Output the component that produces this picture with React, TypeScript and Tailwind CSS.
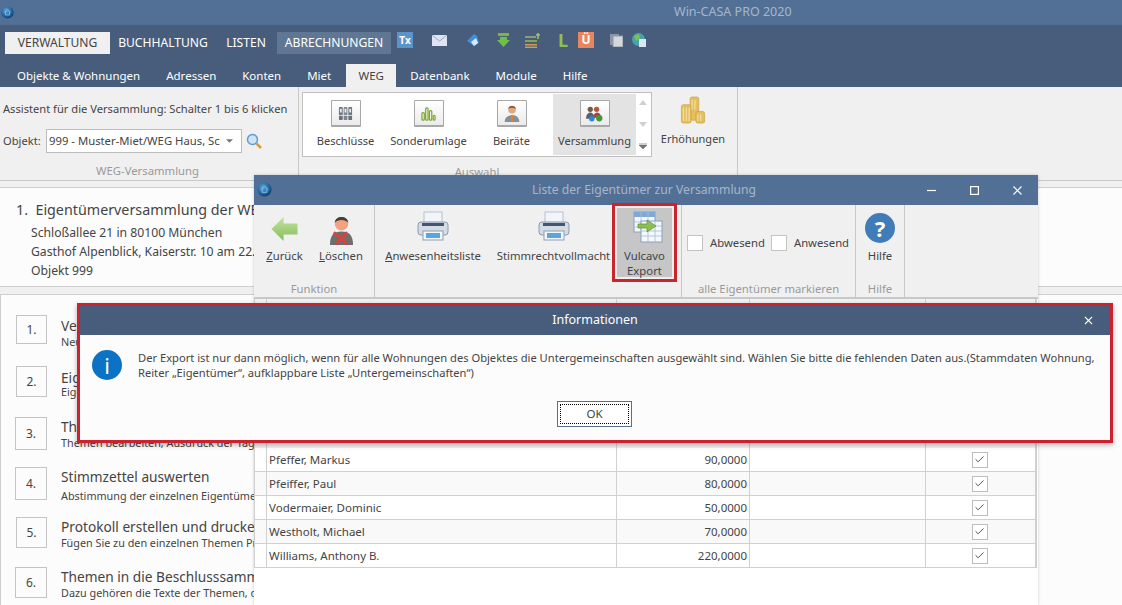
import React from 'react';
import { Check, X } from 'lucide-react';

const FONT = "font-['Noto_Sans','Open_Sans',sans-serif]";

const Globe = ({ className = '', id }: { className?: string; id: string }) => (
  <svg viewBox="0 0 16 16" className={className}>
    <defs>
      <radialGradient id={id} cx="40%" cy="35%" r="70%">
        <stop offset="0%" stopColor="#5aa6dc" />
        <stop offset="70%" stopColor="#1a5d9c" />
        <stop offset="100%" stopColor="#0c3560" />
      </radialGradient>
    </defs>
    <circle cx="8" cy="8" r="7.5" fill={`url(#${id})`} />
    <path d="M4 8l4-3.5L12 8M5.5 7.5V11h5V7.5" fill="none" stroke="#8fbfe3" strokeWidth="1" />
  </svg>
);

const Printer = () => (
  <svg viewBox="0 0 32 30" className="h-[30px] w-[32px]">
    <rect x="7" y="1" width="18" height="13" fill="#f1f4f8" stroke="#b8c2ce" />
    <rect x="1" y="11" width="30" height="13" rx="3" fill="#d3dbe5" stroke="#8c9cb1" />
    <rect x="5" y="12" width="22" height="3" fill="#44556e" />
    <rect x="6" y="20" width="20" height="9" fill="#f4f6f9" stroke="#8ea0b7" />
    <rect x="9" y="22" width="14" height="5" fill="#5ba4dc" />
  </svg>
);

const ExportIcon = () => (
  <svg viewBox="0 0 30 32" className="h-[32px] w-[30px]">
    <rect x="1" y="1" width="21" height="20" fill="#f4f7fb" stroke="#8aa0bb" />
    <rect x="1" y="1" width="21" height="5" fill="#7fa8d8" />
    <path d="M1 11h21M1 16h21M8 1v20M15 1v20" stroke="#a9bbd1" strokeWidth="0.8" />
    <rect x="8" y="10" width="21" height="21" fill="#f4f7fb" stroke="#8aa0bb" />
    <path d="M8 15h21M8 20h21M8 25h21M15 10v21M22 10v21" stroke="#a9bbd1" strokeWidth="0.8" />
    <path d="M5 13h9V9l9 6-9 6v-4H5z" fill="#8cc152" stroke="#5d9130" strokeWidth="0.7" />
  </svg>
);

const ToolbarButton = ({ label, children, width }: { label: React.ReactNode; children: React.ReactNode; width: string }) => (
  <div className={`flex flex-col items-center ${width}`}>
    <div className="flex h-[36px] items-center">{children}</div>
    <div className="mt-[4px] whitespace-nowrap text-center text-[11.3px] leading-[15px] text-[#444]">{label}</div>
  </div>
);

const galleryIcons: Record<string, React.ReactNode> = {
  books: (
    <svg viewBox="0 0 16 16" className="h-[15px] w-[15px]">
      <rect x="1" y="1" width="4" height="14" rx="1" fill="#68707c" />
      <rect x="6" y="1" width="4" height="14" rx="1" fill="#7c8490" />
      <rect x="11" y="1" width="4" height="14" rx="1" fill="#68707c" />
      <path d="M2 3h2v4H2zM7 3h2v4H7zM12 3h2v4h-2z" fill="#e8e8e8" />
      <path d="M1 10h14" stroke="#e8e8e8" />
    </svg>
  ),
  bars: (
    <svg viewBox="0 0 16 16" className="h-[15px] w-[15px]">
      <g fill="none" stroke="#7fa62c" strokeWidth="1.3">
        <rect x="1" y="7" width="2.5" height="8" rx="1" />
        <rect x="5" y="2" width="2.5" height="13" rx="1" />
        <rect x="9" y="5" width="2.5" height="10" rx="1" />
        <rect x="13" y="10" width="2" height="5" rx="1" />
      </g>
    </svg>
  ),
  person: (
    <svg viewBox="0 0 16 16" className="h-[18px] w-[18px]">
      <circle cx="8" cy="5" r="3.4" fill="#e3a878" />
      <path d="M4.6 4.4C5 1 11 1 11.4 4.4 9.5 3 6.5 3 4.6 4.4z" fill="#6f5a44" />
      <path d="M1.5 16c0-4.5 3-6 6.5-6s6.5 1.500 6.500 6z" fill="#8a8f96" />
      <path d="M7 10h2l-.3 5h-1.400z" fill="#e8812f" />
    </svg>
  ),
  group: (
    <svg viewBox="0 0 18 16" className="h-[17px] w-[19px]">
      <circle cx="5" cy="4" r="2.500" fill="#6d5a4b" />
      <circle cx="11" cy="4" r="2.500" fill="#b2573e" />
      <path d="M1 13c0-4 2-6 4-6s4 2 4 6z" fill="#59616b" />
      <path d="M8 12c0-3 1-5 3.500-5S15 9 15 12z" fill="#a9453a" />
      <circle cx="6.500" cy="13" r="2.600" fill="#2f86d6" />
      <circle cx="13.500" cy="12.500" r="3" fill="#3d9a3a" />
    </svg>
  ),
};

const GalleryItem = ({ label, icon, active }: { label: string; icon: string; active?: boolean }) => (
  <div className={`flex w-[83px] flex-col items-center pt-[6px] ${active ? 'bg-[#e3e3e3]' : ''}`}>
    <div className="flex h-[27px] w-[30px] items-center justify-center rounded-[1px] border border-[#a8a8a8] border-b-2 bg-gradient-to-b from-white to-[#ebebeb]">
      {galleryIcons[icon]}
    </div>
    <div className="mt-[6px] whitespace-nowrap text-[11.1px] leading-[16px] text-[#444]">{label}</div>
  </div>
);

const steps = [
  { n: '1.', t: 'Versammlung anlegen', s: 'Neue Versammlung anlegen', box: 'ml-px h-[29px] w-[31px]', cls: 'h-[51px]', top: 'mt-[1px]', sub: 'mt-0' },
  { n: '2.', t: 'Eigentümer zuordnen', s: 'Eigentümer der Versammlung', box: 'ml-px h-[31px] w-[31px]', cls: 'h-[51px]', top: 'mt-[2px]', sub: 'mt-[-2px]' },
  { n: '3.', t: 'Themen festlegen', s: 'Themen bearbeiten, Ausdruck der Tagesordnung', box: 'h-[33px] w-[32px]', cls: 'h-[50px]', top: 'mt-0', sub: 'mt-0' },
  { n: '4.', t: 'Stimmzettel auswerten', s: 'Abstimmung der einzelnen Eigentümer erfassen', box: 'h-[33px] w-[32px]', cls: 'h-[50px]', top: 'mt-0', sub: 'mt-[3px]' },
  { n: '5.', t: 'Protokoll erstellen und drucken', s: 'Fügen Sie zu den einzelnen Themen Protokolltexte hinzu', box: 'ml-px h-[31px] w-[31px]', cls: 'h-[50px]', top: 'mt-0', sub: 'mt-0' },
  { n: '6.', t: 'Themen in die Beschlusssammlung', s: 'Dazu gehören die Texte der Themen, die Beschlüsse', box: 'h-[31px] w-[32px]', cls: 'h-[38px]', top: 'mt-0', sub: 'mt-0' },
];

const owners = [
  ['Pfeffer, Markus', '90,0000'],
  ['Pfeiffer, Paul', '80,0000'],
  ['Vodermaier, Dominic', '50,0000'],
  ['Westholt, Michael', '70,0000'],
  ['Williams, Anthony B.', '220,0000'],
];

const TopIcons = () => (
  <div className="ml-[6px] flex items-center">
    <div className="flex h-[16px] w-[16px] items-center justify-center bg-[#5b94c9] text-[10px] font-bold leading-none text-white">Tx</div>
    <svg viewBox="0 0 15 11" className="ml-[19px] h-[11px] w-[15px]"><rect width="15" height="11" fill="#dfe4f2" /><path d="M0 0l7.500 6L15 0" fill="none" stroke="#9aa6c4" /></svg>
    <svg viewBox="0 0 14 14" className="ml-[19px] h-[14px] w-[14px]"><path d="M1 8l7-7 3 2 2 7-5 3z" fill="#3f8fdc" /><path d="M5 9l5-4 2 5-4 3z" fill="#dfe9f5" /></svg>
    <svg viewBox="0 0 13 14" className="ml-[17px] h-[14px] w-[13px]"><rect x="1" y="0" width="11" height="3" fill="#7cb342" /><path d="M3 4h7v3h3l-6.500 7L0 7h3z" fill="#6cc04a" /></svg>
    <svg viewBox="0 0 16 15" className="ml-[15px] h-[15px] w-[16px]"><path d="M0 3h11v2H0z" fill="#8f9a76" /><path d="M0 7h12v2H0z" fill="#7fa64b" /><path d="M0 11h12v1.500H0z" fill="#d09a55" /><path d="M0 13.500h12V15H0z" fill="#d09a55" /><path d="M13 0v6M11 2h4" stroke="#9cc46b" strokeWidth="1.500" /></svg>
    <span className="ml-[17px] w-[9px] text-[18px] font-bold leading-none text-[#8bc34a]">L</span>
    <div className="ml-[11px] flex h-[16px] w-[16px] items-center justify-center bg-[#e8855c] text-[12px] font-bold leading-none text-white">Ü</div>
    <svg viewBox="0 0 13 13" className="ml-[16px] h-[13px] w-[13px]"><rect x="0" y="0" width="9" height="11" fill="#8d97a3" /><rect x="3" y="2" width="10" height="11" fill="#d3d8de" stroke="#8d97a3" /></svg>
    <svg viewBox="0 0 14 14" className="ml-[9px] h-[14px] w-[14px]"><circle cx="6.500" cy="6.500" r="6.500" fill="#4aa3a8" /><path d="M2 3l5-2 1 4-4 3z" fill="#79c257" /><rect x="7" y="6" width="7" height="8" fill="#dbe6f4" /></svg>
  </div>
);

export default function App() {
  return (
    <div className={`relative flex h-[605px] w-[1122px] flex-col overflow-hidden bg-[#f0f0f0] ${FONT} text-[#444]`}>
      {/* title bar */}
      <div className="flex h-[25px] items-center bg-[#527096] pl-[1px]">
        <Globe id="g1" className="h-[13px] w-[13px]" />
        <div className="ml-[660px] text-[12.5px] text-[#a6b6ca]">Win-CASA PRO 2020</div>
      </div>

      {/* menu */}
      <div className="flex h-[35px] items-start bg-[#485d7c] pl-[5px] pt-[7px] text-[12.1px] text-white">
        <div className="flex h-[22px] w-[105px] items-center justify-center bg-[#f0f0f0] text-[#444]">VERWALTUNG</div>
        <div className="ml-[8px] flex h-[22px] w-[90px] items-center justify-center">BUCHHALTUNG</div>
        <div className="ml-[18px] flex h-[22px] w-[40px] items-center justify-center">LISTEN</div>
        <div className="ml-[11px] flex h-[22px] w-[114px] items-center justify-center bg-[#5f7793]">ABRECHNUNGEN</div>
        <div className="flex h-[17px] items-center"><TopIcons /></div>
      </div>

      {/* tabs */}
      <div className="flex h-[28px] items-end bg-[#485d7c] pl-[17px] text-[11.5px] text-white">
        <div className="flex h-[23px] items-center gap-[26px]">
          <span>Objekte &amp; Wohnungen</span>
          <span>Adressen</span>
          <span>Konten</span>
          <span>Miet</span>
        </div>
        <div className="ml-[15px] flex h-[23px] w-[50px] items-center justify-center bg-[#f0f0f0] text-[#444]">WEG</div>
        <div className="ml-[14px] flex h-[23px] items-center gap-[26px]">
          <span>Datenbank</span>
          <span>Module</span>
          <span>Hilfe</span>
        </div>
      </div>

      {/* ribbon */}
      <div className="flex h-[94px] border-b border-[#c8c8c8] bg-[#f0f0f0]">
        <div className="flex w-[299px] flex-col border-r border-[#c8c8c8] pl-[3px] text-[11.15px]">
          <div className="mt-[13px] whitespace-nowrap leading-[18px]">Assistent für die Versammlung: Schalter 1 bis 6 klicken</div>
          <div className="mt-[11px] flex items-center">
            <span className="w-[43px]">Objekt:</span>
            <div className="flex h-[24px] w-[196px] items-center justify-between border border-[#bdbdbd] bg-white pl-[2px] pr-[8px]">
              <span className="whitespace-nowrap text-[11.3px]">999 - Muster-Miet/WEG Haus, Sc</span>
              <svg viewBox="0 0 8 4" className="h-[4px] w-[7px]"><path d="M0 0h8L4 4z" fill="#777" /></svg>
            </div>
            <svg viewBox="0 0 16 16" className="ml-[4px] h-[16px] w-[16px]">
              <circle cx="6.500" cy="6.500" r="5" fill="#cfe5f7" stroke="#5f9bd1" strokeWidth="1.500" />
              <path d="M10.500 10.500l4.500 4.500" stroke="#d99a3d" strokeWidth="2.500" />
            </svg>
          </div>
          <div className="mt-[10px] pr-[6px] text-center text-[11.3px] leading-[16px] text-[#9a9a9a]">WEG-Versammlung</div>
        </div>
        <div className="flex w-[439px] border-r border-[#c8c8c8] pl-[3px] pt-[5px]">
          <div className="flex flex-col items-center">
            <div className="flex h-[65px] w-[350px] border border-[#c0c0c0] bg-white p-px">
              <GalleryItem label="Beschlüsse" icon="books" />
              <GalleryItem label="Sonderumlage" icon="bars" />
              <GalleryItem label="Beiräte" icon="person" />
              <GalleryItem label="Versammlung" icon="group" active />
              <div className="flex flex-1 flex-col items-center justify-between py-[6px]">
                <svg viewBox="0 0 8 5" className="h-[5px] w-[8px]"><path d="M0 5h8L4 0z" fill="#d0d0d0" /></svg>
                <svg viewBox="0 0 8 5" className="h-[5px] w-[8px]"><path d="M0 0h8L4 5z" fill="#d0d0d0" /></svg>
                <svg viewBox="0 0 8 6" className="h-[6px] w-[8px]"><path d="M0 0h8M0 2h8L4 6 0 2" fill="#777" stroke="#777" strokeWidth="0.7" /></svg>
              </div>
            </div>
            <div className="mt-[7px] text-[11.3px] leading-[16px] text-[#9a9a9a]">Auswahl</div>
          </div>
          <div className="flex w-[82px] flex-col items-center pt-[4px]">
            <svg viewBox="0 0 26 30" className="h-[29px] w-[26px]">
              <g fill="#e3bf60" stroke="#c59a35" strokeWidth="0.6">
                <rect x="10" y="1" width="9" height="24" rx="2" />
                <rect x="1" y="9" width="10" height="19" rx="2" />
                <rect x="16" y="16" width="9" height="12" rx="2" />
              </g>
              <path d="M3 12v14M6 12v14M9 12v14M12 4v10M15 4v10M18 19v7M21 19v7" stroke="#f6e6ae" />
            </svg>
            <div className="mt-[6px] text-[11px] leading-[16px] text-[#444]">Erhöhungen</div>
          </div>
        </div>
      </div>

      {/* Versammlung header */}
      <div className="mt-[6px] h-[101px] border-y border-[#cfcfcf] bg-[#fcfcfc] pl-[16px] pt-[11px]">
        <div className="whitespace-nowrap text-[14.3px] leading-[22px] text-[#444]">1.&nbsp; Eigentümerversammlung der WEG</div>
        <div className="ml-[15px] mt-[2px] text-[12.2px] leading-[19px] text-[#444]">
          <div>Schloßallee 21 in 80100 München</div>
          <div>Gasthof Alpenblick, Kaiserstr. 10 am 22.03.2020</div>
          <div>Objekt 999</div>
        </div>
      </div>

      {/* steps */}
      <div className="mt-[7px] flex-1 border-l border-t border-[#cfcfcf] bg-[#fcfcfc] pl-[14px] pt-[20px]">
        {steps.map((step) => (
          <div key={step.n} className={`flex items-start ${step.cls}`}>
            <div className={`flex shrink-0 items-center justify-center border border-[#c4c4c4] text-[12px] ${step.box}`}>{step.n}</div>
            <div className={`ml-[14px] whitespace-nowrap ${step.top}`}>
              <div className="text-[13.7px] leading-[19px]">{step.t}</div>
              <div className={`text-[10.8px] leading-[14px] ${step.sub}`}>{step.s}</div>
            </div>
          </div>
        ))}
      </div>

      {/* Liste der Eigentümer window */}
      <div className="absolute left-[254px] top-[175px] flex h-[430px] w-[784px] flex-col bg-white shadow-[0_0_3px_rgba(0,0,0,0.2)]">
        <div className="relative flex h-[30px] shrink-0 items-center justify-center bg-[#527096] pr-[4px] text-[12.2px] text-[#a6b6ca]">
          <Globe id="g2" className="absolute left-[3px] top-[7px] h-[15px] w-[15px]" />
          Liste der Eigentümer zur Versammlung
          <div className="absolute right-[16px] top-0 flex h-full items-center gap-[34px]">
            <svg viewBox="0 0 9 9" className="h-[9px] w-[9px]"><path d="M0 4.500h9" stroke="#fff" strokeWidth="1.200" /></svg>
            <svg viewBox="0 0 9 9" className="h-[9px] w-[9px]"><rect x="0.600" y="0.600" width="7.800" height="7.800" fill="none" stroke="#fff" strokeWidth="1.200" /></svg>
            <svg viewBox="0 0 9 9" className="h-[9px] w-[9px]"><path d="M0.500 0.500l8 8M8.500 0.500l-8 8" stroke="#fff" strokeWidth="1.200" /></svg>
          </div>
        </div>

        <div className="flex h-[94px] shrink-0 border-b-2 border-[#c8c8c8] bg-[#f0f0f0] text-[11.3px]">
          <div className="flex w-[121px] flex-col border-r border-[#c8c8c8]">
            <div className="flex pl-[12px] pt-[3px]">
              <ToolbarButton label={<><u>Z</u>urück</>} width="w-[37px]">
                <svg viewBox="0 0 30 28" className="mt-[6px] h-[26px] w-[29px]">
                  <defs>
                    <linearGradient id="arrow" x1="0" y1="0" x2="0" y2="1">
                      <stop offset="0%" stopColor="#c3e3a2" />
                      <stop offset="100%" stopColor="#86bc58" />
                    </linearGradient>
                  </defs>
                  <path d="M14 1v7h15v12H14v7L1 14z" fill="url(#arrow)" />
                </svg>
              </ToolbarButton>
              <ToolbarButton label={<><u>L</u>öschen</>} width="w-[44px] ml-[16px]">
                <svg viewBox="0 0 26 32" className="mt-[6px] h-[31px] w-[25px]">
                  <path d="M1 32c0-10 4-14 12-14s12 4 12 14z" fill="#6e6e6e" />
                  <circle cx="13" cy="10" r="7" fill="#f3a281" />
                  <path d="M6 9C6 1 20 1 20 9 17 5 9 5 6 9z" fill="#4a3f35" />
                  <path d="M5 19l14 12M19 19L7 31" stroke="#d9443a" strokeWidth="3" />
                </svg>
              </ToolbarButton>
            </div>
            <div className="mt-auto text-center leading-[16px] text-[#9a9a9a]">Funktion</div>
          </div>

          <div className="flex w-[307px] items-start border-r border-[#c8c8c8] pt-[1px]">
            <div className="flex pl-[11px] pt-[2px]">
              <ToolbarButton label={<><u>A</u>nwesenheitsliste</>} width="w-[94px]"><Printer /></ToolbarButton>
              <ToolbarButton label="Stimmrechtvollmacht" width="w-[115px] ml-[16px]"><Printer /></ToolbarButton>
            </div>
            <div className="ml-px h-[79px] w-[65px] shrink-0 -translate-y-[3px] border-[3px] border-[#c9252f] bg-[#eeeeee] p-[2px]">
              <div className="flex h-full flex-col items-center bg-[#c6c6c6]">
                <div className="ml-[6px] mt-[3px]"><ExportIcon /></div>
                <div className="mt-[5px] text-center text-[11.3px] leading-[15px] text-[#444]">Vulcavo<br />Export</div>
              </div>
            </div>
          </div>

          <div className="flex w-[174px] flex-col border-r border-[#c8c8c8]">
            <div className="flex items-center pl-[5px] pt-[30px]">
              <div className="h-[16px] w-[16px] border border-[#c4c4c4] bg-white" />
              <span className="ml-[7px]">Abwesend</span>
              <div className="ml-[6px] h-[16px] w-[16px] border border-[#c4c4c4] bg-white" />
              <span className="ml-[7px]">Anwesend</span>
            </div>
            <div className="mt-auto text-center leading-[16px] text-[#9a9a9a]">alle Eigentümer markieren</div>
          </div>

          <div className="flex w-[49px] flex-col items-center border-r border-[#c8c8c8] pt-[8px]">
            <div className="flex h-[30px] w-[30px] items-center justify-center rounded-full bg-[#3f7cb8] text-[22px] font-bold leading-none text-white">?</div>
            <div className="mt-[5px] leading-[15px]">Hilfe</div>
            <div className="mt-auto leading-[16px] text-[#9a9a9a]">Hilfe</div>
          </div>
        </div>

        {/* owners grid */}
        <div className="grid grid-cols-[13px_350px_133px_176px_111px] text-[11.5px]">
          <div className="h-[149px] border-x border-[#d0d0d0] bg-[#f2f2f2]" />
          <div className="border-r border-[#d0d0d0] bg-[#f2f2f2]" />
          <div className="border-r border-[#d0d0d0] bg-[#f2f2f2]" />
          <div className="border-r border-[#d0d0d0] bg-[#f2f2f2]" />
          <div className="border-r-2 border-[#d0d0d0] bg-[#f2f2f2]" />
          {owners.map(([name, amount], i) => {
            const rowBg = i % 2 === 1 ? 'bg-[#f9f9f9]' : 'bg-white';
            return (
              <React.Fragment key={name}>
                <div className={`h-[24px] border-x border-b border-[#d0d0d0] ${rowBg}`} />
                <div className={`flex items-center border-b border-r border-[#d0d0d0] pl-[2px] ${rowBg}`}>{name}</div>
                <div className={`flex items-center justify-end border-b border-r border-[#d0d0d0] pr-[2px] ${rowBg}`}>{amount}</div>
                <div className={`border-b border-r border-[#d0d0d0] ${rowBg}`} />
                <div className={`flex items-center justify-center border-b border-r-2 border-[#d0d0d0] pr-[2px] ${rowBg}`}>
                  <div className="flex h-[16px] w-[16px] items-center justify-center border border-[#bdbdbd] bg-white">
                    <Check size={11} strokeWidth={2} className="text-[#444]" />
                  </div>
                </div>
              </React.Fragment>
            );
          })}
        </div>
      </div>

      {/* Informationen dialog */}
      <div className="absolute left-[77px] top-[303px] flex h-[140px] w-[1036px] flex-col border-[3.500px] border-[#cc2230] bg-[#fcfcfc] shadow-[0_2px_5px_rgba(0,0,0,0.3)]">
        <div className="relative flex h-[29px] shrink-0 items-center justify-center bg-[#485d7c] text-[12.500px] text-white">
          Informationen
          <X size={13} strokeWidth={2} className="absolute right-[15px] top-[8px]" />
        </div>
        <div className="flex pl-[12px] pt-[15px]">
          <div className="flex h-[30px] w-[30px] shrink-0 items-center justify-center rounded-full bg-[#0b72c6] text-[22px] leading-none text-white">i</div>
          <div className="ml-[16px] w-[965px] text-[11.16px] leading-[15px] text-[#444]">
            Der Export ist nur dann möglich, wenn für alle Wohnungen des Objektes die Untergemeinschaften ausgewählt sind. Wählen Sie bitte die fehlenden Daten aus.(Stammdaten Wohnung, Reiter „Eigentümer“, aufklappbare Liste „Untergemeinschaften“)
          </div>
        </div>
        <div className="absolute left-[477px] top-[94.500px] flex h-[26px] w-[75px] items-center justify-center border border-[#5a6f8a] bg-white p-[2px]">
          <div className="flex h-full w-full items-center justify-center border border-dotted border-black text-[11.5px] text-[#444]">OK</div>
        </div>
      </div>
    </div>
  );
}
